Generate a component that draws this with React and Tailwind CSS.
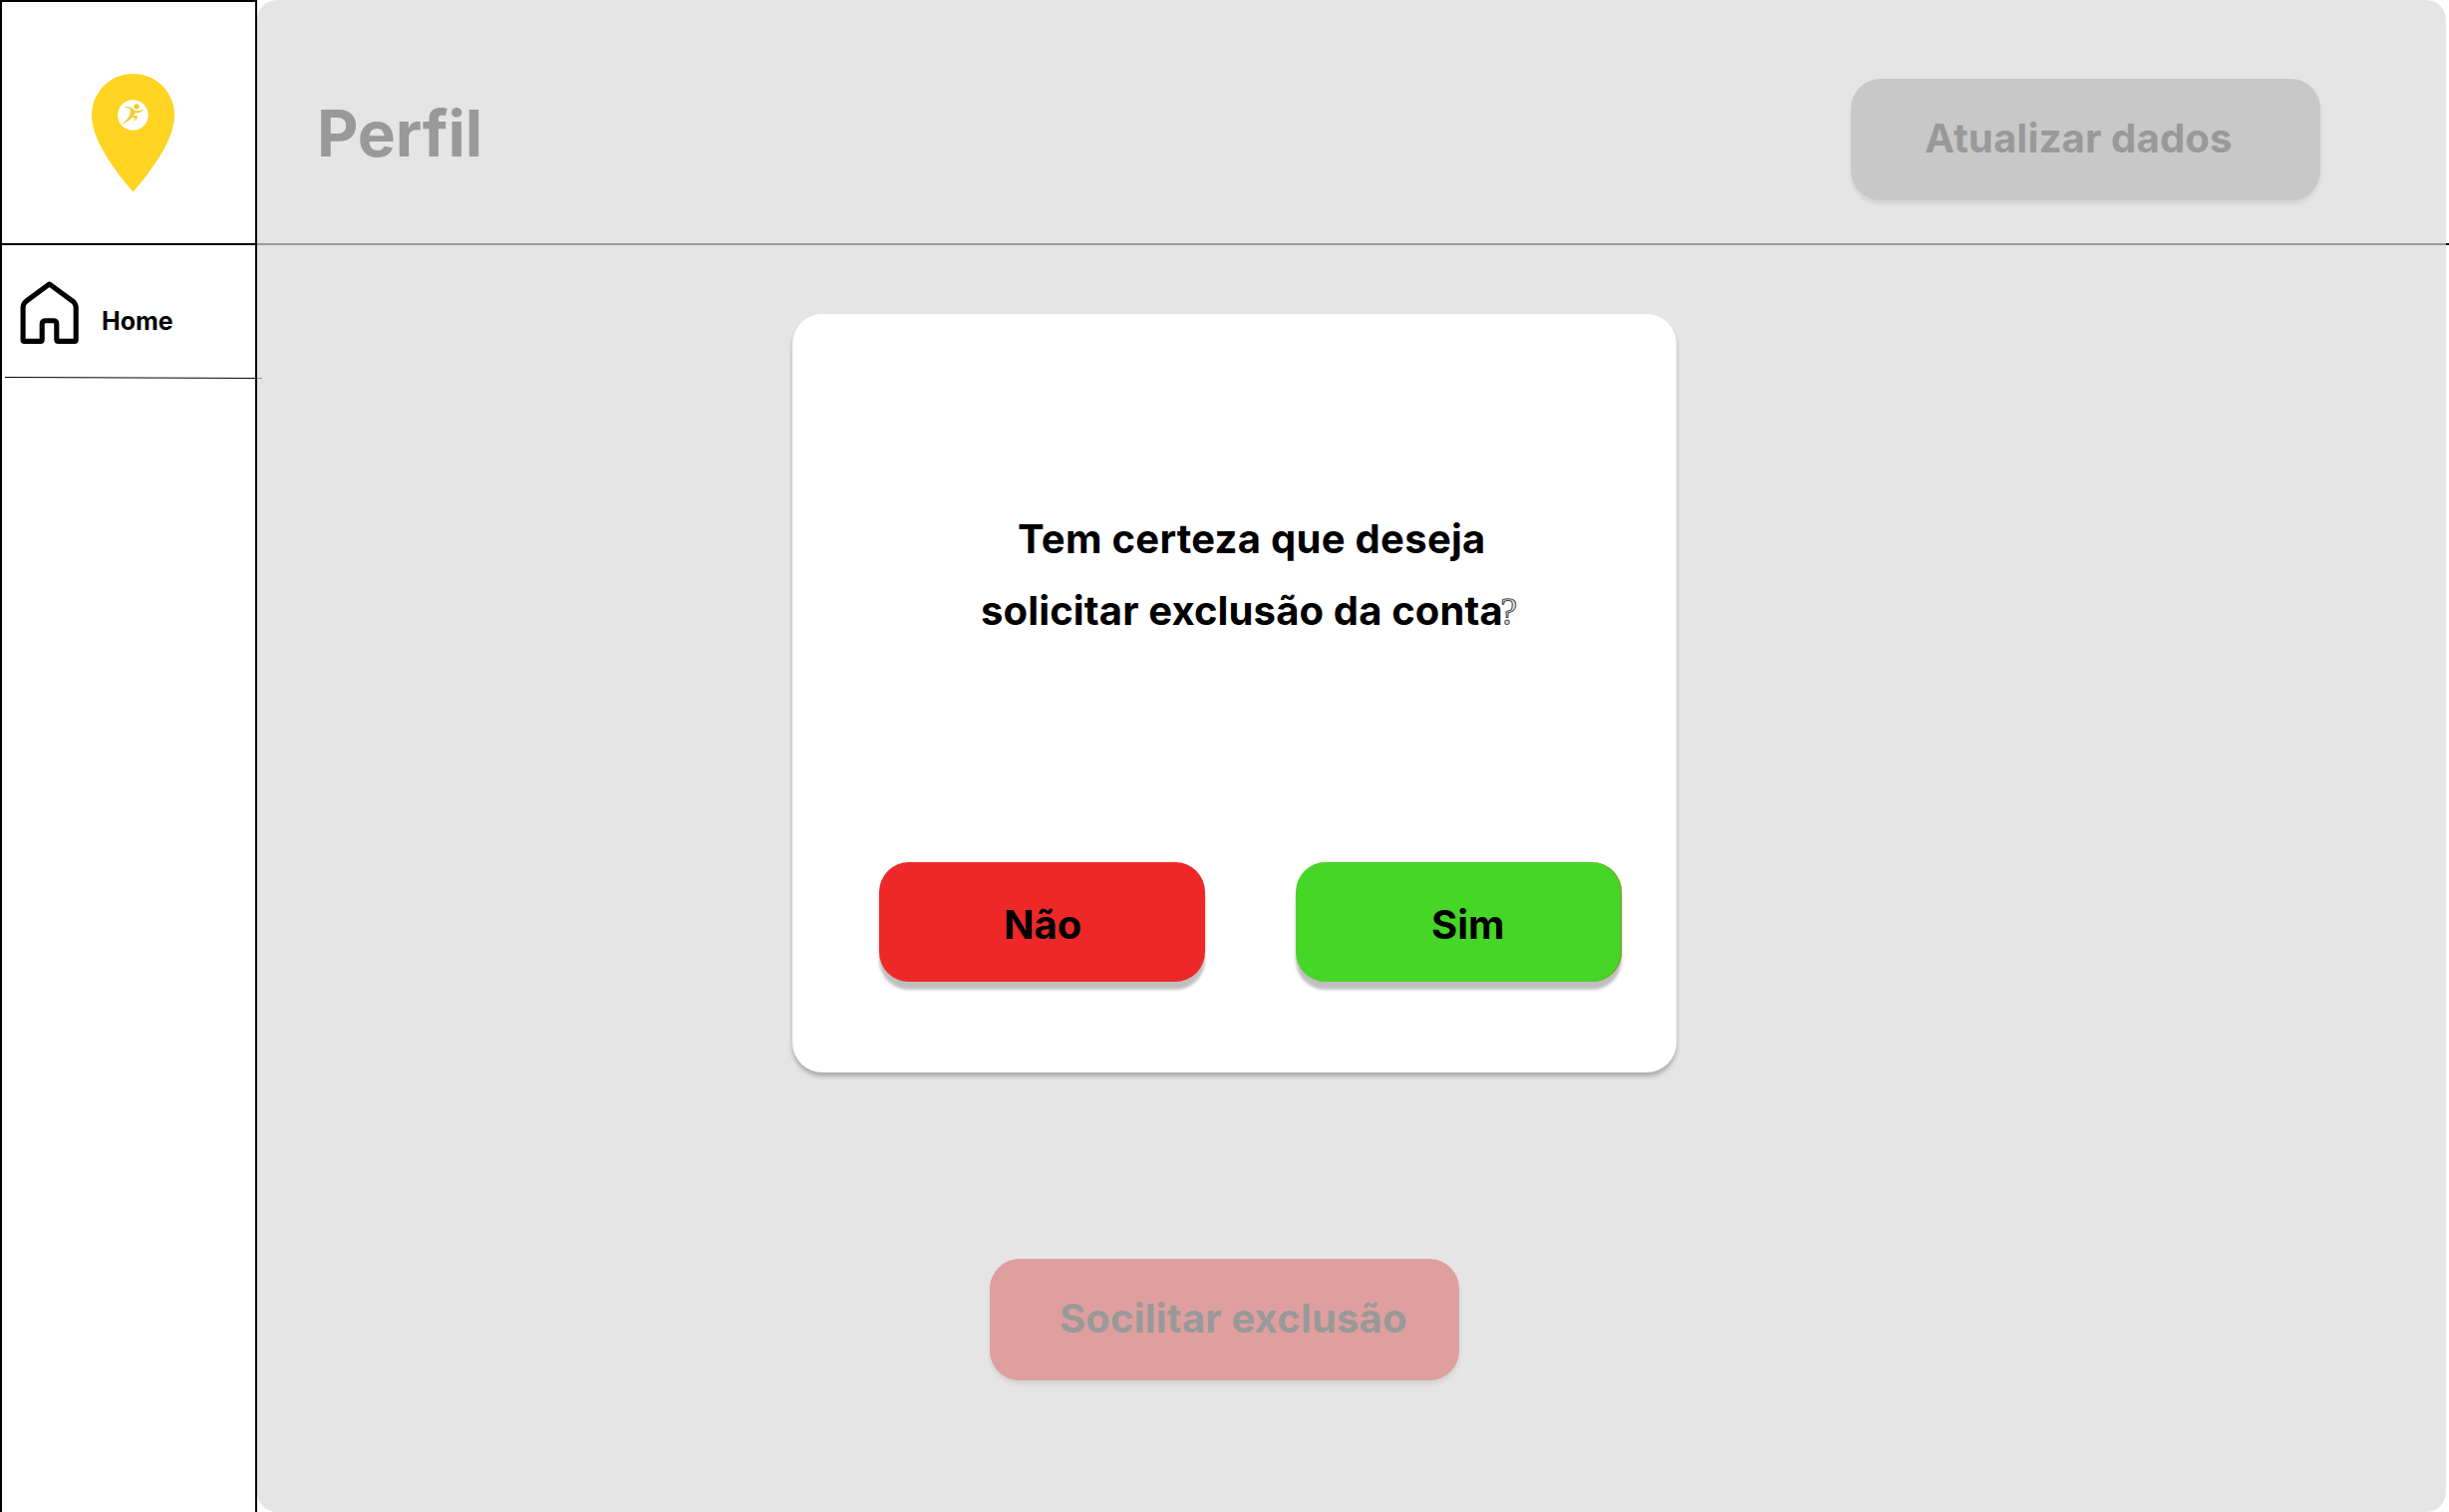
function PinLogo() {
  return (
    <svg className="mt-[72px] ml-[90px] block h-[119px] w-[83px]" viewBox="92 74 83 119">
      <path
        d="M133.5 74C157 74 175 93 175 115.500C175 140 153 170 133.500 192.500C114 170 92 140 92 115.500C92 93 110 74 133.500 74Z"
        fill="#ffd422"
      />
      <circle cx="133.400" cy="115.500" r="15.300" fill="#fff" />
      <g fill="#f5cc2c">
        <circle cx="137" cy="106.900" r="2.700" />
        <path d="M123.500 107.300C127 106.700 131 107 133 109L136 111.200C139 111.500 142 110.900 144.500 109.600C142.500 112.600 139 114 135.700 113C135 115 133.800 116 132.800 117.500C130 120.500 126 123.500 121.800 124.800C126 121.500 129 118.500 130.300 115C131 112.500 131.700 110.500 130.500 109.500C129 108 126 107.600 123.500 107.300Z" />
        <path d="M133.200 116.500C135 115.700 137.500 115.800 138.100 117.300C138 119.500 135.800 121.300 132.800 121.600C134.600 120.500 135.800 119.300 135.600 118.500C134.900 117.900 133.800 118.200 132.900 118.400Z" />
      </g>
    </svg>
  );
}

function HomeIcon() {
  return (
    <svg className="h-[64px] w-[60px] shrink-0" viewBox="20 282 60 64" fill="none" stroke="#000" strokeWidth="5.100" strokeLinejoin="round">
      <path d="M49.500 285L73.200 302.400Q76.200 305 76.200 308.500V340.900Q76.200 342.400 74.700 342.400H58.600Q56.800 342.400 56.800 340.700V325Q56.800 321.700 53.500 321.700H46Q42.200 321.700 42.200 325V340.700Q42.200 342.400 40.500 342.400H24.500Q23.100 342.400 23.100 340.900V308.500Q23.100 305 26 302.400Z" />
    </svg>
  );
}

function Sidebar() {
  return (
    <aside className="relative z-10 flex w-[258px] shrink-0 flex-col border-x-2 border-t-2 border-black">
      <div className="h-[244px] border-b-2 border-black">
        <PinLogo />
      </div>
      <a className="flex h-[132px] items-start pt-[36px] pl-[18px]">
        <HomeIcon />
        <span className="mt-[25px] ml-[22px] text-[25px] leading-[30px] font-bold">Home</span>
      </a>
      <svg className="ml-[3px] h-[3px] w-[258px] shrink-0" viewBox="0 0 258 3">
        <path d="M0 0.500L253 1.480" stroke="#000" strokeWidth="1" />
        <path d="M253 1.500H258" stroke="#999" strokeWidth="1" />
      </svg>
    </aside>
  );
}

function ConfirmDialog() {
  return (
    <div className="mt-[69px] ml-[537px] h-[761px] w-[887px] rounded-[30px] bg-white pt-[190px] text-[40px] leading-[72px] font-bold shadow-[0_4px_4px_rgba(0,0,0,0.25)]">
      <p className="h-[72px] pl-[226px] tracking-[0.28px] whitespace-nowrap">Tem certeza que deseja</p>
      <p className="h-[72px] pl-[189px] tracking-[0.14px] whitespace-nowrap">
        solicitar exclusão da conta
        <span className="-ml-[3px] inline-block -translate-y-px -skew-x-3 font-['Liberation_Serif'] text-[38px] leading-none font-normal text-[#ddd] [-webkit-text-stroke:1px_#444]">?</span>
      </p>
      <div className="mt-[216px] ml-[87px] flex gap-[91px] leading-[48px]">
        <button className="h-[120px] w-[327px] rounded-[30px] bg-[#ee2829] pt-[5px] pl-[125px] text-left shadow-[0_8px_3px_rgba(0,0,0,0.25)]">Não</button>
        <button className="h-[120px] w-[327px] rounded-[30px] bg-[#46d627] pt-[5px] pl-[136px] text-left shadow-[0_8px_3px_rgba(0,0,0,0.25),inset_-1px_0_0_#8f8a1c]">Sim</button>
      </div>
    </div>
  );
}

export default function App() {
  return (
    <div className="flex h-[1517px] w-[2457px] overflow-hidden bg-white font-['Inter',sans-serif] text-black">
      <Sidebar />
      <main className="relative w-[2196px] rounded-[20px] bg-[#e5e5e5]">
        <header className="flex h-[246px] items-start border-b-2 border-[#999] text-[#999]">
          <h1 className="mt-[95px] ml-[60px] w-[1539px] text-[64px] leading-[78px] font-bold tracking-[-0.2px]">Perfil</h1>
          <button className="mt-[79px] h-[122px] w-[471px] rounded-[30px] bg-[#c8c8c8] pb-[2px] pl-[74px] text-left text-[40px] leading-[48px] font-bold tracking-[0.2px] shadow-[0_4px_4px_rgba(0,0,0,0.08)]">
            Atualizar dados
          </button>
        </header>
        <span className="absolute top-[244px] left-full h-[2px] w-[3px] bg-black" />
        <ConfirmDialog />
        <button className="mt-[187px] ml-[735px] h-[122px] w-[471px] rounded-[30px] bg-[#df9f9f] pb-[2px] pl-[70px] text-left text-[40px] leading-[48px] font-bold tracking-[0.18px] text-[#999] shadow-[0_4px_4px_rgba(0,0,0,0.08)]">
          Socilitar exclusão
        </button>
      </main>
    </div>
  );
}
